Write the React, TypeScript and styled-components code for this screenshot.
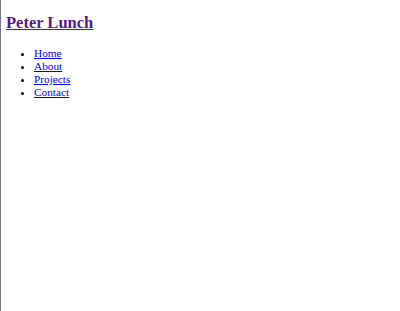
import React from "react";
import styled, { createGlobalStyle } from "styled-components";

const GlobalStyle = createGlobalStyle`
  html, body {
    margin: 0;
    padding: 0;
    background: #ffffff;
  }
  body {
    font-family: "Liberation Serif", "Times New Roman", serif;
  }
`;

const links = ["Home", "About", "Projects", "Contact"];

const App = () => {
  return (
    <>
      <GlobalStyle />
      <Page>
        <Header>
          <Title href="#">Peter Lunch</Title>
        </Header>
        <Nav>
          <Menu>
            {links.map((l) => (
              <Item key={l}>
                <MenuLink href="#">{l}</MenuLink>
              </Item>
            ))}
          </Menu>
        </Nav>
      </Page>
    </>
  );
};

export default App;

const Page = styled.div`
  min-height: 311px;
  box-sizing: border-box;
  border-left: 1px solid #7b7787;
  padding: 13px 5px 0;
`;

const Header = styled.h2`
  margin: 0 0 15px;
  font-size: 16.5px;
  font-weight: bold;
  line-height: 19px;
`;

const Title = styled.a`
  color: #551a8b;
  text-decoration: underline;
`;

const Nav = styled.nav``;

const Menu = styled.ul`
  margin: 0;
  padding-left: 28px;
  list-style: disc;
  font-size: 11.3px;
  line-height: 13px;
`;

const Item = styled.li``;

const MenuLink = styled.a`
  color: #0000ee;
  text-decoration: underline;
`;
